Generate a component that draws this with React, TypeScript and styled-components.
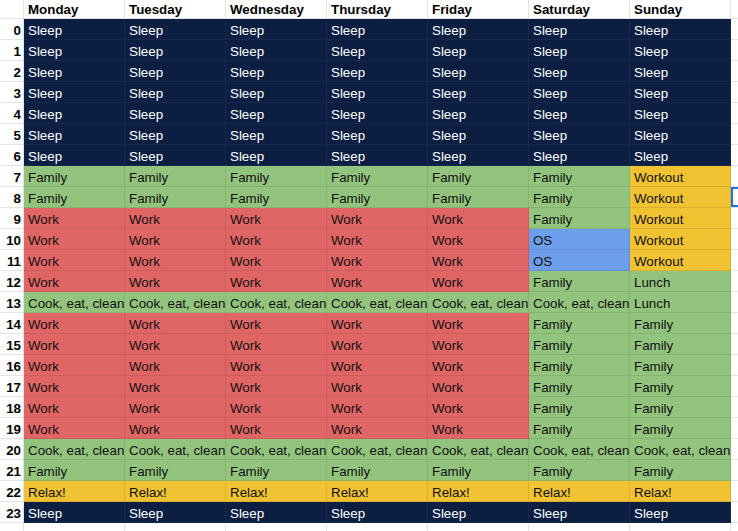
import styled, { createGlobalStyle } from "styled-components";

const GlobalStyle = createGlobalStyle`
  html, body {
    margin: 0;
    padding: 0;
    background: #ffffff;
    overflow: hidden;
  }
`;

const COLORS = {
  sleep: { bg: "#0c1f42", fg: "#ffffff", line: "#16294c" },
  family: { bg: "#93c47d", fg: "#111111", line: "#86b371" },
  work: { bg: "#e06666", fg: "#111111", line: "#cc5d5d" },
  workout: { bg: "#f1c232", fg: "#111111", line: "#dbb02d" },
  os: { bg: "#6d9eeb", fg: "#111111", line: "#6390d6" },
};

type Kind = keyof typeof COLORS;

const KIND: Record<string, Kind> = {
  Sleep: "sleep",
  Family: "family",
  Work: "work",
  Workout: "workout",
  OS: "os",
  Lunch: "family",
  "Cook, eat, clean": "family",
  "Relax!": "workout",
};

const DAYS = [
  "Monday",
  "Tuesday",
  "Wednesday",
  "Thursday",
  "Friday",
  "Saturday",
  "Sunday",
];

const week = (wd: string, sat: string, sun: string) => [
  wd, wd, wd, wd, wd, sat, sun,
];

const SCHEDULE: string[][] = [
  ...Array.from({ length: 7 }, () => week("Sleep", "Sleep", "Sleep")),
  week("Family", "Family", "Workout"),
  week("Family", "Family", "Workout"),
  week("Work", "Family", "Workout"),
  week("Work", "OS", "Workout"),
  week("Work", "OS", "Workout"),
  week("Work", "Family", "Lunch"),
  week("Cook, eat, clean", "Cook, eat, clean", "Lunch"),
  ...Array.from({ length: 6 }, () => week("Work", "Family", "Family")),
  week("Cook, eat, clean", "Cook, eat, clean", "Cook, eat, clean"),
  week("Family", "Family", "Family"),
  week("Relax!", "Relax!", "Relax!"),
  week("Sleep", "Sleep", "Sleep"),
];

const Sheet = styled.div`
  display: grid;
  grid-template-columns: 24px repeat(8, 101px);
  grid-template-rows: 19px repeat(25, 21px);
  font-family: "Liberation Sans", Arial, sans-serif;
  font-size: 13.33px;
  width: 738px;
  height: 531px;
  overflow: hidden;
`;

const Cell = styled.div<{ $kind?: Kind; $selected?: boolean }>`
  box-sizing: border-box;
  display: flex;
  align-items: flex-end;
  padding: 0 1px 1px 4px;
  white-space: nowrap;
  overflow: hidden;
  background: ${(p) => (p.$kind ? COLORS[p.$kind].bg : "#ffffff")};
  color: ${(p) => (p.$kind ? COLORS[p.$kind].fg : "#000000")};
  border-right: 1px solid
    ${(p) => (p.$kind ? COLORS[p.$kind].line : "#e2e3e3")};
  border-bottom: 1px solid
    ${(p) => (p.$kind ? COLORS[p.$kind].line : "#e2e3e3")};
  box-shadow: ${(p) => (p.$selected ? "inset 0 0 0 2px #1a73e8" : "none")};
`;

const HeadCell = styled(Cell)`
  font-weight: bold;
  padding-bottom: 1px;
`;

const RowNum = styled(Cell)`
  justify-content: flex-end;
  font-weight: bold;
  padding-right: 2px;
  padding-left: 0;
`;

export default function App() {
  return (
    <>
      <GlobalStyle />
      <Sheet>
        <HeadCell />
        {DAYS.map((d) => (
          <HeadCell key={d}>{d}</HeadCell>
        ))}
        <HeadCell />
        {SCHEDULE.map((row, r) => (
          <Row key={r} index={r} row={row} />
        ))}
        <RowNum />
        {Array.from({ length: 8 }, (_, i) => (
          <Cell key={i} />
        ))}
      </Sheet>
    </>
  );
}

const Row = ({ index, row }: { index: number; row: string[] }) => (
  <>
    <RowNum>{index}</RowNum>
    {row.map((v, c) => (
      <Cell key={c} $kind={KIND[v]}>
        {v}
      </Cell>
    ))}
    <Cell $selected={index === 8} />
  </>
);
